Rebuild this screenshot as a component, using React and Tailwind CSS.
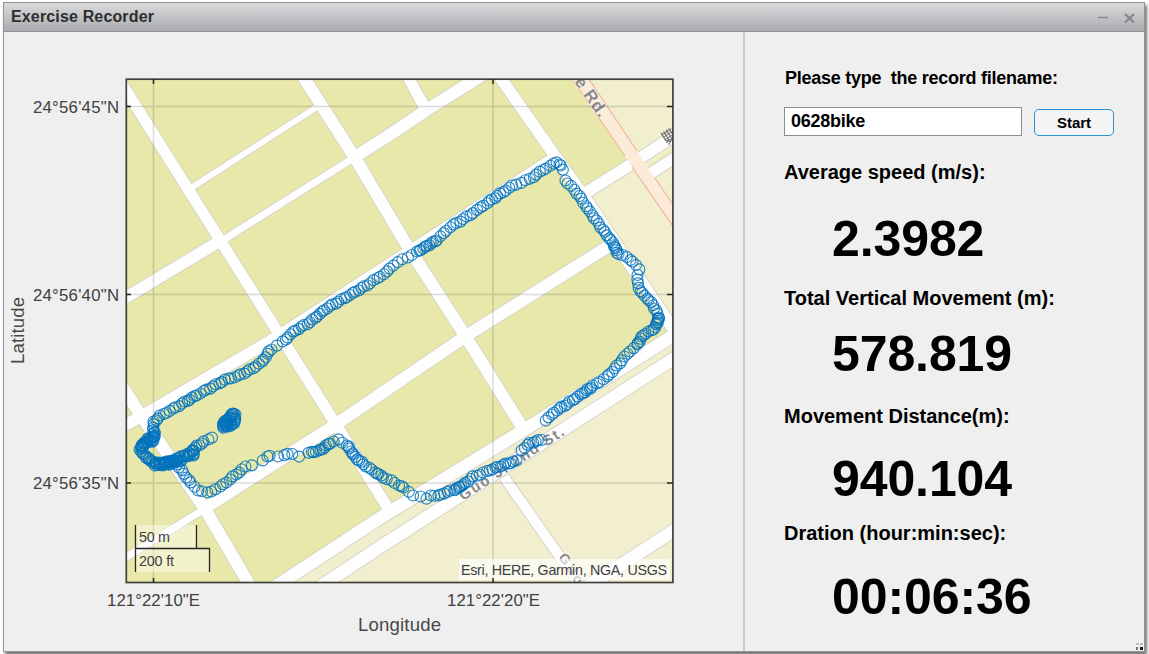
import React from "react";

const roads = [
  { d: "M110 65 L220 240 L335 423 L391 513", w: 11 },
  { d: "M299 70 L355 158 L408 247 L466 337 L524 430", w: 12 },
  { d: "M402 66 L425 108", w: 11 },
  { d: "M495 70 L553 153 L588 202 L680 339", w: 11.5 },
  { d: "M118 380 L140 414 L205 509 L256 596", w: 12 },
  { d: "M191 188 L317 107", w: 6 },
  { d: "M220 242 L352 159", w: 7 },
  { d: "M110 307 L220 241", w: 11.5 },
  { d: "M355 157 L400 128 L425 111 L492 69", w: 12 },
  { d: "M110 433 L140 417 L277 337 L410 251 L556 157", w: 11.5 },
  { d: "M205 508 L335 425 L466 336 L612 244", w: 12 },
  { d: "M203 510 L110 567", w: 7 },
  { d: "M255 600 L380 518 L524 430 L690 325", w: 12.5 },
  { d: "M300 600 L380 547 L480 483 L673 359 L690 348", w: 12.5 },
  { d: "M587 192 L630 165 L690 125", w: 11.5 },
  { d: "M645 177 L690 148", w: 11 },
  { d: "M504 477 L586 594", w: 10 },
  { d: "M570 598 L690 520", w: 12.5 },
];

// Each run is a continuous stretch of GPS fixes: [x, y, spacing to next point]
const runs = [
  [[212, 437, 4], [204, 442, 3], [197, 446, 3], [190, 453, 2], [181, 457, 1.5], [172, 461, 1.2], [163, 463, 1.5], [154, 463, 1.5], [146, 457, 1.8], [140, 450, 2], [142, 445, 1.6], [148, 439, 1.2], [155, 436, 3], [153, 427, 3], [154, 422, 3], [160, 416, 4], [173, 409, 3.6], [185, 402, 2.8], [197, 395, 3.5], [210, 388, 3.5], [225, 380, 3.5], [238, 376, 3.5], [250, 370, 3.5], [262, 362, 3], [271, 349, 6], [283, 342, 4], [293, 332, 3.4], [310, 322, 3.2], [327, 308, 3.5], [350, 295, 3.5], [367, 285, 4], [387, 272, 4.5], [393, 265, 5], [417, 252, 2.4], [437, 240, 4.2], [450, 227, 4], [470, 215, 3.8], [487, 203, 3], [500, 194, 4], [512, 186, 4.4], [530, 179, 4], [543, 170, 4], [557, 162, 3.5], [561, 166, 4], [563, 170, 3]],
  [[565, 180, 4.4], [577, 193, 4], [590, 212, 3.8], [603, 230, 3], [613, 243, 2], [618, 254, 5], [627, 257, 5], [633, 262, 4], [639, 269, 5], [637, 280, 4], [640, 291, 3], [647, 298, 3], [653, 305, 3], [659, 317, 1.4], [657, 323, 2.5], [654, 329, 3], [643, 335, 2.5], [637, 345, 4], [627, 354, 4], [617, 366, 4], [607, 377, 4], [593, 386, 2.2], [583, 393, 3.5], [567, 404, 3], [557, 410, 3.5], [546, 420, 4]],
  [[541, 440, 3.2], [530, 443, 3.2], [522, 450, 3]],
  [[516, 461, 3], [503, 465, 2.6], [490, 470, 3.6], [473, 477, 3], [463, 485, 1.8], [454, 490, 3], [444, 493, 3.5], [438, 496, 4], [431, 495, 6], [426, 499, 4], [421, 497, 6], [413, 495, 6], [404, 488, 2.8], [399, 485, 4], [383, 477, 2.5], [375, 472, 4], [366, 466, 3], [355, 457, 2.6], [347, 445, 4.5], [338, 440, 4], [330, 443, 2.2], [321, 450, 2.7], [309, 453, 2.5]],
  [[299, 456, 5], [292, 454, 5], [284, 455, 6], [278, 456, 6]],
  [[270, 456, 3], [267, 457, 4], [263, 460, 4]],
  [[252, 465, 7], [245, 467, 4], [233, 477, 4], [220, 487, 4.3], [207, 493, 4], [198, 490, 4], [191, 483, 4], [184, 474, 4], [177, 464, 3]],
  [[154, 433, 1.4], [153, 441, 1.4], [147, 442, 1.4], [141, 447, 1.5]],
  [[155, 465, 1.8], [161, 465, 1.8], [170, 464, 1.2], [177, 461, 1.6], [182, 461, 2]],
  [[187, 456, 2], [194, 455, 2], [193, 450, 2]],
  [[223, 427, 1.2], [224, 422, 1.2], [229, 419, 1.2], [233, 413, 1.2], [235, 415, 1.6], [235, 422, 1.6], [230, 426, 1.6], [224, 426, 1.6], [231, 421, 1.6]],
];

function samplePoints(run) {
  const out = [];
  for (let i = 0; i < run.length - 1; i++) {
    const [x, y, step] = run[i];
    const [u, v] = run[i + 1];
    const n = Math.max(1, Math.round(Math.hypot(u - x, v - y) / step));
    for (let k = 0; k < n; k++) out.push([x + ((u - x) * k) / n, y + ((v - y) * k) / n]);
  }
  const last = run[run.length - 1];
  out.push([last[0], last[1]]);
  return out;
}

const fixes = runs
  .flatMap(samplePoints)
  .map(([x, y], i) => [x + Math.sin(i * 2.3) * 0.5, y + Math.cos(i * 1.7) * 0.6]);

function GeoChart() {
  return (
    <svg width="738" height="618" viewBox="5 32 738 618" className="block font-['Liberation_Sans',Arial,sans-serif]">
      <clipPath id="map">
        <rect x="126" y="79" width="547" height="503.5" />
      </clipPath>
      <g clipPath="url(#map)">
        <rect x="126" y="79" width="548" height="504" fill="#e8e8aa" />
        <path d="M255 600 L380 518 L524 430 L690 325 V600 Z" fill="#f2efcf" />
        <path d="M588 193 L640 161 L573 75 L690 70 V345 Z" fill="#f2efcf" />
        <path d="M573 79 L630 161 L588 193 L560 150 L540 79 Z" fill="#e8e8aa" />
        <path d="M646 165 L674 147 V152 L648 168 Z" fill="#eeecc0" />
        {roads.map((r, i) => (
          <path key={i} d={r.d} fill="none" stroke="#d6d4c6" strokeWidth={r.w + 2} />
        ))}
        {roads.map((r, i) => (
          <path key={i} d={r.d} fill="none" stroke="#fefefe" strokeWidth={r.w} />
        ))}
        <path d="M567 72 L690 251 V230 L584 72 Z" fill="#fcebd8" />
        <path d="M568 73 L625 156 M632 167 L690 251 M585 73 L637 151 M655 178 L690 230" fill="none" stroke="#f3b59c" strokeWidth="1.2" />
        <g fill="#8a8a8a" stroke="#ffffff" strokeWidth="2" paintOrder="stroke" strokeOpacity="0.5" fontSize="15" fontWeight="bold">
          <text transform="translate(463 501) rotate(-33)" textLength="122">Guo Ji 2nd St.</text>
          <text transform="translate(565 69) rotate(55)" textLength="60" fontSize="17">Jie Rd.</text>
          <text transform="translate(558 557) rotate(57)" textLength="34" fontSize="14">Guo</text>
        </g>
        <g transform="translate(665 141) rotate(-33)" stroke="#77736f" strokeWidth="1.1" fill="none">
          <path d="M0-7H12M0-4H12M0-1H12M1-9V1M4-9V4M7-9V4M10-9V1M0 2H12M1 5L11 0M1 0L11 5" />
        </g>
      </g>
      <path d="M126 106.5H673M126 294.5H673M126 483H673M153.5 79V583M493 79V583" stroke="#262626" strokeOpacity="0.16" strokeWidth="1.5" fill="none" />
      <g fill="none" stroke="#0072bd" strokeWidth="1.1" strokeOpacity="0.85">
        {fixes.map(([x, y], i) => (
          <circle key={i} cx={x} cy={y} r="5.5" />
        ))}
      </g>
      <rect x="136" y="525" width="60" height="23" fill="#fff" fillOpacity="0.42" />
      <rect x="136" y="549" width="73" height="23" fill="#fff" fillOpacity="0.42" />
      <path d="M135.5 525V572M135.5 548.5H209.5V572M196.5 525V548" fill="none" stroke="#262626" strokeWidth="1.3" />
      <rect x="459" y="559" width="211" height="21" fill="#fff" fillOpacity="0.62" />
      <rect x="126.3" y="79.2" width="546.6" height="503.3" fill="none" stroke="#404038" strokeWidth="1.7" />
      <path d="M126 106.5h5M126 294.5h5M126 483h5M673 106.5h-6M673 294.5h-6M673 483h-6M153.5 79v5M493 79v5M153.5 583v-5M493 583v-5" stroke="#262626" strokeWidth="1.5" />
      <g fill="#404040">
        <g fontSize="14.3">
          <text x="139" y="542" textLength="31">50 m</text>
          <text x="139" y="566" textLength="35">200 ft</text>
          <text x="461" y="575" textLength="206">Esri, HERE, Garmin, NGA, USGS</text>
        </g>
        <g fontSize="16.8">
          <text x="33" y="113" textLength="86">{"24°56'45\"N"}</text>
          <text x="33" y="301" textLength="86">{"24°56'40\"N"}</text>
          <text x="33" y="489" textLength="86">{"24°56'35\"N"}</text>
          <text x="107" y="606" textLength="93">{"121°22'10\"E"}</text>
          <text x="447" y="606" textLength="93">{"121°22'20\"E"}</text>
        </g>
        <g fontSize="18.6" fill="#484848">
          <text x="358" y="631" textLength="83">Longitude</text>
          <text transform="translate(24 364) rotate(-90)" textLength="67">Latitude</text>
        </g>
      </g>
    </svg>
  );
}

function Reading({ label, value, className, gap }) {
  return (
    <div className={className}>
      <div className="h-6 whitespace-nowrap text-[20px] leading-6">{label}</div>
      <div className={`ml-12 h-[50px] whitespace-nowrap text-[50px] leading-[50px] tracking-[-0.1px] ${gap}`}>{value}</div>
    </div>
  );
}

export default function App() {
  return (
    <div className="h-[654px] w-[1149px] overflow-hidden bg-white pl-[3px] pt-[2px] font-['Liberation_Sans',Arial,sans-serif]">
      <div className="flex h-[650px] w-[1142px] flex-col border border-[#929496] bg-[#efefef] shadow-[2px_3px_3px_rgba(0,0,0,0.55)]">
        <header className="flex h-[29px] shrink-0 items-center border-b border-[#929496] bg-gradient-to-b from-[#dadbdd] to-[#aaacaf] pl-[7px] pr-[9px]">
          <h1 className="-mt-px flex-1 text-[16px] font-bold leading-5 tracking-[0.15px] text-[#2e2e2e]">Exercise Recorder</h1>
          <svg width="38" height="14" viewBox="0 0 38 14" fill="none" stroke="#88898b" className="mt-0.5">
            <path d="M1 6.5H11" strokeWidth="1.6" />
            <path d="M28 3L37 11.5M37 3L28 11.5" strokeWidth="2.4" />
          </svg>
        </header>
        <main className="flex min-h-0 flex-1">
          <section className="w-[741px] shrink-0 overflow-hidden border-r-2 border-[#cacaca] pl-px">
            <GeoChart />
          </section>
          <section className="relative flex-1 pl-[39px] font-bold text-black">
            <div className="mt-[34px] h-6 whitespace-pre pl-px text-[18px] leading-6 tracking-[-0.25px]">Please type  the record filename:</div>
            <div className="mt-[17px] flex h-[29px] items-start">
              <input
                type="text"
                defaultValue="0628bike"
                className="h-[29px] w-[238px] rounded-none border border-[#8e8e8e] bg-white pl-[6px] text-[18px] font-bold tracking-[-0.25px] outline-none"
              />
              <button className="ml-3 mt-[2px] h-[27px] w-[80px] rounded-[5px] border border-[#2a93d5] bg-[#f4f4f4] text-[15px] font-bold leading-[25px]">
                Start
              </button>
            </div>
            <Reading className="mt-6" gap="mt-[30px]" label="Average speed (m/s):" value="2.3982" />
            <Reading className="mt-[22px]" gap="mt-[19px]" label="Total Vertical Movement (m):" value="578.819" />
            <Reading className="mt-[25px]" gap="mt-[26px]" label="Movement Distance(m):" value="940.104" />
            <Reading className="mt-[17px]" gap="mt-[27px]" label="Dration (hour:min:sec):" value="00:06:36" />
            <svg width="8" height="8" viewBox="0 0 8 8" className="absolute bottom-0 right-0">
              <path d="M0 0h3v2h-3zM4 0h3v2h-3z" fill="#bdbdbd" />
              <path d="M0 4h2v3h-2z" fill="#777777" />
              <path d="M4 4h3v3h-3z" fill="#1c1c1c" />
            </svg>
          </section>
        </main>
      </div>
    </div>
  );
}
